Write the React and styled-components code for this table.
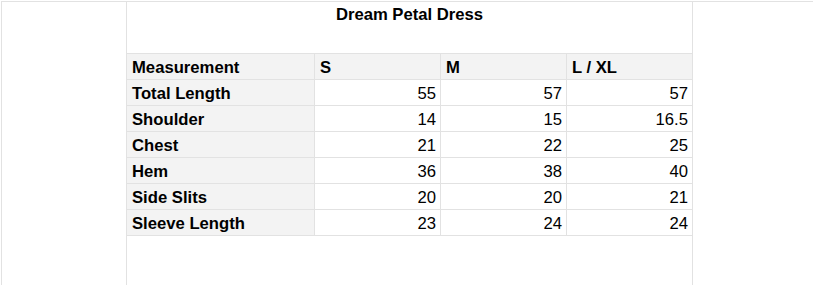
import React from "react";
import styled, { createGlobalStyle } from "styled-components";

const Global = createGlobalStyle`
  html, body { margin: 0; padding: 0; background: #ffffff; }
  body { font-family: "Liberation Sans", Arial, sans-serif; color: #000; }
`;

const Page = styled.div`
  margin: 1px 0 0 1px;
  border-top: 1px solid #e2e2e2;
  border-left: 1px solid #e2e2e2;
  height: calc(100vh - 2px);
  display: flex;
  box-sizing: border-box;
`;

const Gutter = styled.div`
  width: 124px;
  flex: none;
  border-right: 1px solid #e2e2e2;
`;

const Sheet = styled.div`
  width: 565px;
  flex: none;
  border-right: 1px solid #e2e2e2;
  display: flex;
  flex-direction: column;
`;

const Title = styled.h1`
  margin: 0 0 25px;
  height: 26px;
  line-height: 26px;
  font-size: 16.67px;
  font-weight: 700;
  text-align: center;
`;

const Grid = styled.div`
  display: grid;
  grid-template-columns: 188px 126px 126px 125px;
  border-top: 1px solid #e2e2e2;
`;

const Cell = styled.div`
  box-sizing: border-box;
  height: 26px;
  line-height: 25px;
  padding: 1px 4px 0 5px;
  font-size: 16.67px;
  font-weight: ${(p) => (p.$bold ? 700 : 400)};
  text-align: ${(p) => (p.$num ? "right" : "left")};
  background: ${(p) => (p.$shade ? "#f3f3f3" : "#ffffff")};
  border-bottom: 1px solid #e2e2e2;
  border-right: ${(p) => (p.$last ? "none" : "1px solid #e2e2e2")};
  white-space: nowrap;
`;

const headers = ["Measurement", "S", "M", "L / XL"];
const rows = [
  ["Total Length", "55", "57", "57"],
  ["Shoulder", "14", "15", "16.5"],
  ["Chest", "21", "22", "25"],
  ["Hem", "36", "38", "40"],
  ["Side Slits", "20", "20", "21"],
  ["Sleeve Length", "23", "24", "24"],
];

export default function App() {
  return (
    <>
      <Global />
      <Page>
        <Gutter />
        <Sheet>
          <Title>Dream Petal Dress</Title>
          <Grid>
            {headers.map((h, i) => (
              <Cell key={h} $bold $shade $last={i === 3}>
                {h}
              </Cell>
            ))}
            {rows.map((r) =>
              r.map((v, i) => (
                <Cell
                  key={r[0] + i}
                  $bold={i === 0}
                  $shade={i === 0}
                  $num={i > 0}
                  $last={i === 3}
                >
                  {v}
                </Cell>
              ))
            )}
          </Grid>
        </Sheet>
      </Page>
    </>
  );
}
